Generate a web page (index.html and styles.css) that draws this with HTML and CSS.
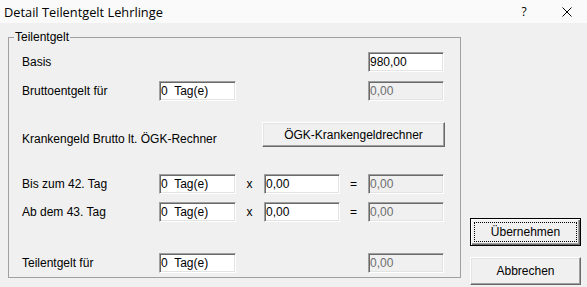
FILE: index.html
```html
<!DOCTYPE html>
<html>
 <head>
	<meta charset="UTF-8">
	<title>Detail Teilentgelt Lehrlinge</title>
	<link rel="stylesheet" href="styles.css">
 </head>
 <body>
 <div class="window">
	<!-- Titelleiste -->
	<div class="titlebar">
		<span class="title">Detail Teilentgelt Lehrlinge</span>
		<span class="tb-help">?</span>
		<span class="tb-close">
			<svg width="10" height="10" viewBox="0 0 10 10"><path d="M0.5 0.5 L9.5 9.5 M9.5 0.5 L0.5 9.5" stroke="#000" stroke-width="1" fill="none"/></svg>
		</span>
	</div>

	<div class="client">
		<fieldset class="group">
			<legend>Teilentgelt</legend>

			<div class="row row-basis">
				<span class="lbl">Basis</span>
				<input class="edit c6" type="text" value="980,00">
			</div>

			<div class="row row-brutto">
				<span class="lbl">Bruttoentgelt für</span>
				<input class="edit c2" type="text" value="0&nbsp; Tag(e)">
				<input class="edit c6" type="text" value="0,00" disabled>
			</div>

			<div class="row row-kranken">
				<span class="lbl lbl-wide">Krankengeld Brutto lt. ÖGK-Rechner</span>
				<button class="btn btn-oegk">ÖGK-Krankengeldrechner</button>
			</div>

			<div class="row row-bis">
				<span class="lbl">Bis zum 42. Tag</span>
				<input class="edit c2" type="text" value="0&nbsp; Tag(e)">
				<span class="op">x</span>
				<input class="edit c4" type="text" value="0,00">
				<span class="op">=</span>
				<input class="edit c6" type="text" value="0,00" disabled>
			</div>

			<div class="row row-ab">
				<span class="lbl">Ab dem 43. Tag</span>
				<input class="edit c2" type="text" value="0&nbsp; Tag(e)">
				<span class="op">x</span>
				<input class="edit c4" type="text" value="0,00">
				<span class="op">=</span>
				<input class="edit c6" type="text" value="0,00" disabled>
			</div>

			<div class="row row-teil">
				<span class="lbl">Teilentgelt für</span>
				<input class="edit c2" type="text" value="0&nbsp; Tag(e)">
				<input class="edit c6" type="text" value="0,00" disabled>
			</div>
		</fieldset>

		<div class="side">
			<button class="btn btn-side btn-default">Übernehmen</button>
			<button class="btn btn-side">Abbrechen</button>
		</div>
	</div>
 </div>
 </body>
</html>
```

FILE: styles.css
```css
*{margin:0;padding:0;box-sizing:border-box;}
body{
	background:#f0f0f0;
	font-family:"Liberation Sans", Arial, sans-serif;
	font-size:12px;
	color:#000;
}

.window{
	width:587px;
	height:287px;
	display:flex;
	flex-direction:column;
}

/* Titelleiste */
.titlebar{
	height:23px;
	background:#fafafa;
	display:flex;
	align-items:center;
	padding-left:4px;
}
.title{
	flex:1;
	font-family:"Open Sans", "Noto Sans", sans-serif;
	font-size:12.8px;
}
.tb-help{
	width:46px;
	text-align:center;
	font-family:"Open Sans", sans-serif;
	font-size:12px;
}
.tb-close{
	width:40px;
	display:flex;
	justify-content:center;
}

.client{
	flex:1;
	display:flex;
	padding:7px 6px 2px 8px;
}

/* Gruppenrahmen */
.group{
	width:453px;
	height:248px;
	border:1px solid #a0a0a0;
	padding:8px 0 0 13px;
}
.group legend{
	margin-left:-8px;
	padding:0 1px;
	line-height:14px;
}

.row{
	display:grid;
	grid-template-columns:137px 77px 28px 76px 28px 76px;
	align-items:center;
	height:20px;
	line-height:20px;
}
.row-brutto{margin-top:9px;}
.row-kranken{margin-top:21px;height:25px;align-items:end;}
.row-bis{margin-top:27px;}
.row-ab{margin-top:8px;}
.row-teil{margin-top:31px;}

.lbl{grid-column:1;white-space:nowrap;}
.lbl-wide{grid-column:1 / 4;line-height:14px;padding-bottom:1px;}
.op{text-align:center;margin-left:-1px;}
.c2{grid-column:2;}
.c4{grid-column:4;}
.c6{grid-column:6;}

/* Eingabefelder, 3D vertieft */
.edit{
	height:20px;
	width:100%;
	font:12px "Liberation Sans", Arial, sans-serif;
	color:#000;
	background:#fff;
	border:1px solid;
	border-color:#a0a0a0 #fff #fff #a0a0a0;
	box-shadow:inset 1px 1px 0 #696969, inset -1px -1px 0 #e3e3e3;
	padding:0 1px;
	outline:none;
}
.edit:disabled{
	background:#f0f0f0;
	color:#6d6d6d;
	-webkit-text-fill-color:#6d6d6d;
	opacity:1;
}

/* Schaltflaechen, 3D erhaben */
.btn{
	font:12px "Liberation Sans", Arial, sans-serif;
	color:#000;
	background:#f0f0f0;
	border:1px solid;
	border-color:#fff #696969 #696969 #fff;
	box-shadow:inset -1px -1px 0 #a0a0a0, inset 1px 1px 0 #e3e3e3;
}
.btn-oegk{
	grid-column:4 / 7;
	height:25px;
	margin:0 -1px 0 -2px;
}

.side{
	flex:1;
	display:flex;
	flex-direction:column;
	justify-content:flex-end;
	align-items:flex-end;
	gap:11px;
}
.btn-side{
	width:111px;
	height:28px;
}
.btn-default{
	position:relative;
	border:1px solid #000;
	box-shadow:inset 1px 1px 0 #fff, inset -1px -1px 0 #696969, inset -2px -2px 0 #a0a0a0;
}
.btn-default::after{ /* Fokusrahmen */
	content:"";
	position:absolute;
	left:3px; top:3px; right:3px; bottom:3px;
	border:1px dotted #000;
}
```
